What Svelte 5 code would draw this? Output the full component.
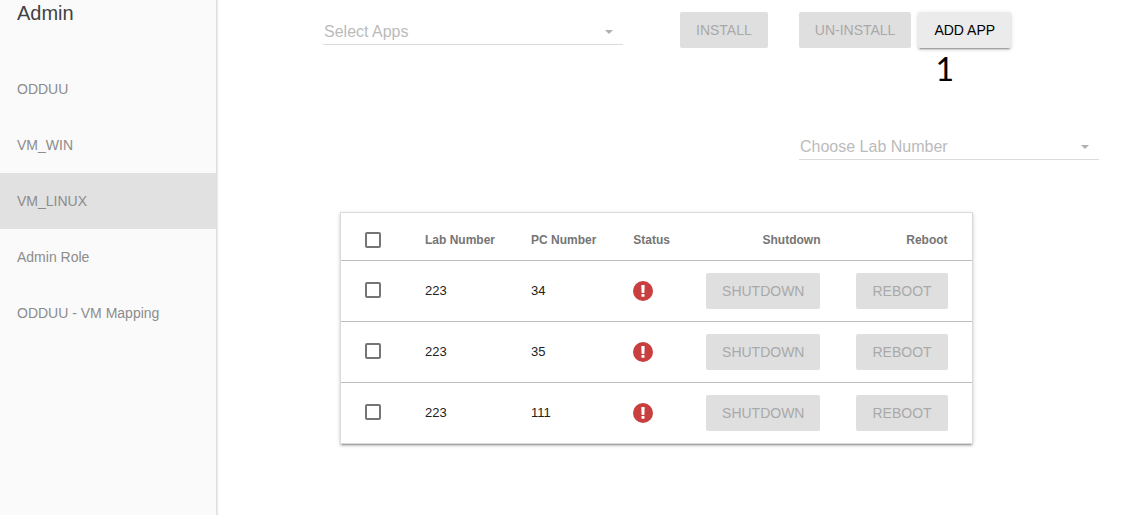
<script>
  const links = ['ODDUU', 'VM_WIN', 'VM_LINUX', 'Admin Role', 'ODDUU - VM Mapping'];
  const active = 'VM_LINUX';

  const machines = [
    { lab: '223', pc: '34' },
    { lab: '223', pc: '35' },
    { lab: '223', pc: '111' }
  ];

  let selected = $state(machines.map(() => false));
  let all = $derived(selected.every(Boolean));

  function toggleAll(event) {
    const checked = event.currentTarget.checked;
    selected = machines.map(() => checked);
  }
</script>

{#snippet picker(label)}
  <div class="picker">
    <select aria-label={label} disabled>
      <option>{label}</option>
    </select>
    <svg class="arrow" viewBox="0 0 8 4" aria-hidden="true"><path d="M0 0h8L4 4z" /></svg>
  </div>
{/snippet}

<div class="layout">
  <aside class="drawer">
    <h1>Admin</h1>
    <nav>
      {#each links as link}
        <a href="#{link}" class:active={link === active}>{link}</a>
      {/each}
    </nav>
  </aside>

  <main>
    <div class="toolbar">
      {@render picker('Select Apps')}
      <div class="actions">
        <button class="btn" disabled>INSTALL</button>
        <div class="pair">
          <button class="btn" disabled>UN-INSTALL</button>
          <div class="add">
            <button class="btn raised">ADD APP</button>
            <span class="step">1</span>
          </div>
        </div>
      </div>
    </div>

    <div class="filter">
      {@render picker('Choose Lab Number')}
    </div>

    <table>
      <thead>
        <tr>
          <th><input type="checkbox" aria-label="Select all" checked={all} onchange={toggleAll} /></th>
          <th>Lab Number</th>
          <th class="pc">PC Number</th>
          <th>Status</th>
          <th class="end">Shutdown</th>
          <th class="end">Reboot</th>
        </tr>
      </thead>
      <tbody>
        {#each machines as machine, i}
          <tr>
            <td><input type="checkbox" aria-label="Select PC {machine.pc}" bind:checked={selected[i]} /></td>
            <td>{machine.lab}</td>
            <td class="pc">{machine.pc}</td>
            <td class="control">
              <svg class="status" viewBox="0 0 20 20" aria-hidden="true">
                <circle cx="10" cy="10" r="10" fill="#c93f3f" />
                <path
                  d="M8.9 4h2.2q.6 0 .6.6l-.3 6.8q0 .6-.6.6H9.200q-.6 0-.6-.6l-.3-6.8q0-.6.6-.6z"
                  fill="#fff"
                />
                <rect x="8.5" y="13" width="3" height="2.8" rx="0.6" fill="#fff" />
              </svg>
            </td>
            <td class="control end"><button class="btn" disabled>SHUTDOWN</button></td>
            <td class="control end"><button class="btn" disabled>REBOOT</button></td>
          </tr>
        {/each}
      </tbody>
    </table>
  </main>
</div>

<style>
  :global(body) {
    background: #fff;
    font-family: 'Liberation Sans', Arial, sans-serif;
  }

  .layout {
    display: flex;
    min-height: 100vh;
  }

  .drawer {
    flex: 0 0 216px;
    background: #fafafa;
    border-right: 1px solid #e0e0e0;
    box-shadow: 1px 0 1px rgba(0, 0, 0, 0.08);
  }

  h1 {
    margin: 0;
    padding: 0 17px 35px;
    font-size: 20px;
    font-weight: 400;
    line-height: 26px;
    color: #424242;
  }

  nav a {
    display: block;
    padding: 0 17px;
    font-size: 14px;
    line-height: 56px;
    color: #8c8c8c;
    text-decoration: none;
  }

  nav a.active {
    background: #e1e1e1;
  }

  main {
    flex: 1;
    min-width: 0;
    padding: 12px 44px 40px 106px;
  }

  .toolbar {
    display: flex;
    align-items: center;
    gap: 57px;
  }

  .actions {
    display: flex;
    gap: 31px;
  }

  .pair {
    display: flex;
    gap: 7px;
  }

  .add {
    position: relative;
  }

  .step {
    position: absolute;
    top: 100%;
    left: 17px;
    font-family: Lato, sans-serif;
    font-size: 32px;
    line-height: 42px;
    color: #000;
  }

  .filter {
    display: flex;
    justify-content: flex-end;
    margin: 82px 0 52px;
  }

  .picker {
    position: relative;
    flex: 0 1 300px;
  }

  select {
    display: block;
    box-sizing: border-box;
    width: 100%;
    height: 30px;
    margin: 0;
    padding: 3px 24px 0 1px;
    border: 0;
    border-bottom: 1px solid #dcdcdc;
    border-radius: 0;
    background: transparent;
    font: 16px 'Liberation Sans', Arial, sans-serif;
    color: #bbb;
    opacity: 1;
    appearance: none;
  }

  .arrow {
    position: absolute;
    right: 10px;
    top: 15px;
    width: 8px;
    height: 4px;
    fill: #b0b0b0;
    pointer-events: none;
  }

  .btn {
    display: block;
    height: 36px;
    margin: 0;
    padding: 0 16px;
    border: 0;
    border-radius: 2px;
    background: #dfdfdf;
    font: 14px 'Liberation Sans', Arial, sans-serif;
    color: #a9a9a9;
    white-space: nowrap;
  }

  .btn.raised {
    background: #ebebeb;
    color: #000;
    box-shadow:
      0 2px 2px 0 rgba(0, 0, 0, 0.14),
      0 3px 1px -2px rgba(0, 0, 0, 0.2),
      0 1px 5px 0 rgba(0, 0, 0, 0.12);
  }

  table {
    margin-left: 17px;
    border: 1px solid rgba(0, 0, 0, 0.14);
    border-spacing: 0;
    background: #fff;
    box-shadow:
      0 2px 2px 0 rgba(0, 0, 0, 0.14),
      0 3px 1px -2px rgba(0, 0, 0, 0.2),
      0 1px 5px 0 rgba(0, 0, 0, 0.12);
  }

  th,
  td {
    padding: 0 18px;
    text-align: left;
    white-space: nowrap;
  }

  th {
    height: 41px;
    padding-top: 6px;
    font-size: 12px;
    font-weight: 700;
    color: #757575;
  }

  td {
    height: 58px;
    padding-bottom: 2px;
    border-top: 1px solid #bdbdbd;
    font-size: 13px;
    color: #212121;
  }

  td.control {
    height: 60px;
    padding-bottom: 0;
  }

  th:first-child,
  td:first-child {
    padding-left: 24px;
    padding-right: 26px;
  }

  th:last-child,
  td:last-child {
    padding-right: 24px;
  }

  .pc {
    padding-right: 19px;
  }

  .end {
    text-align: right;
  }

  .end .btn {
    margin-left: auto;
  }

  input[type='checkbox'] {
    display: block;
    box-sizing: border-box;
    width: 16px;
    height: 16px;
    margin: 0;
    border: 2px solid #757575;
    border-radius: 2px;
    background: #fff;
    appearance: none;
  }

  input[type='checkbox']:checked {
    background: #3f51b5;
    border-color: #3f51b5;
  }

  .status {
    display: block;
    width: 20px;
    height: 20px;
  }
</style>
